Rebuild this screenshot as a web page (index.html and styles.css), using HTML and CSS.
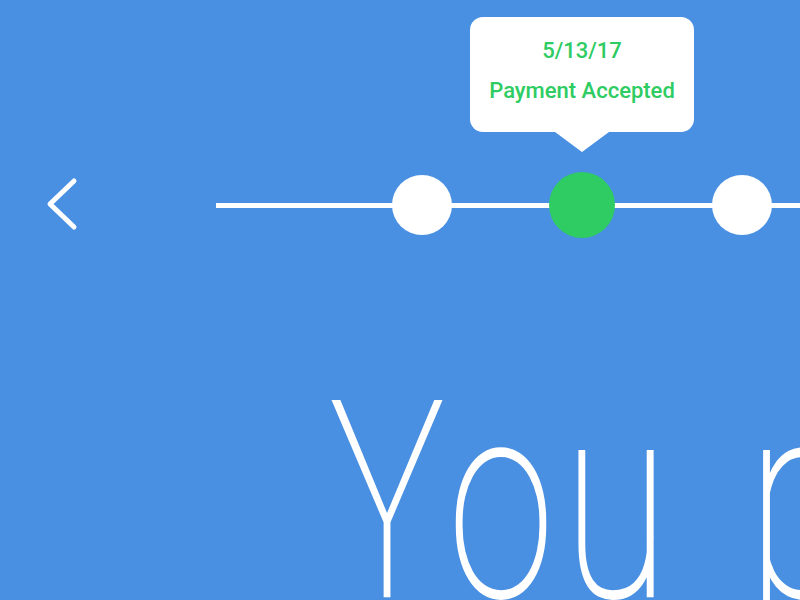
FILE: index.html
```html
<!DOCTYPE html>
<html lang="en">
<head>
  <meta charset="UTF-8">
  <meta name="viewport" content="width=device-width, initial-scale=1.0">
  <title>Payment Timeline</title>
  <link rel="stylesheet" href="styles.css">
</head>
<body>

  <!-- Timeline header -->
  <div class="timeline">
    <button class="back-button" aria-label="Back">
      <svg width="36" height="56" viewBox="0 0 36 56">
        <polyline points="30,4 6,27 30,50" fill="none" stroke="#ffffff" stroke-width="5" stroke-linecap="round" stroke-linejoin="round"/>
      </svg>
    </button>

    <div class="track">
      <div class="step"></div>
      <div class="step active">
        <div class="tooltip">
          <div class="tooltip-date">5/13/17</div>
          <div class="tooltip-status">Payment Accepted</div>
        </div>
      </div>
      <div class="step"></div>
    </div>
  </div>

  <!-- Headline -->
  <h1 class="headline"><span>You paid</span></h1>

</body>
</html>
```

FILE: styles.css
```css
/* Global Styles */
body {
  margin: 0;
  padding: 0;
  width: 800px;
  height: 600px;
  overflow: hidden;
  background-color: #4a90e2; /* Blue background */
  font-family: Roboto, sans-serif;
  color: white;
}

/* Timeline */
.timeline {
  display: flex;
  align-items: center;
  padding-top: 172px;
  height: 66px;
}

.back-button {
  background: none;
  border: none;
  padding: 0;
  margin-left: 44px;
  margin-right: 136px;
  width: 36px;
  height: 56px;
  cursor: pointer;
}

.back-button svg {
  display: block;
}

.track {
  flex: 1;
  height: 66px;
  display: flex;
  align-items: center;
  gap: 97px;
  padding-left: 176px;
  background: linear-gradient(#ffffff, #ffffff) left center / 100% 5px no-repeat;
}

.step {
  flex: none;
  width: 60px;
  height: 60px;
  border-radius: 50%;
  background-color: #ffffff;
  position: relative;
}

.step.active {
  width: 66px;
  height: 66px;
  background-color: #2ecc62; /* Green for current step */
}

/* Tooltip above the active step */
.tooltip {
  position: absolute;
  bottom: calc(100% + 40px);
  left: 50%;
  transform: translateX(-50%);
  width: 224px;
  height: 115px;
  box-sizing: border-box;
  padding-top: 14px;
  background-color: #ffffff;
  border-radius: 13px;
  color: #2ecc62;
  text-align: center;
  font-weight: 500;
  font-size: 22px;
  line-height: 40px;
}

.tooltip::after {
  content: "";
  position: absolute;
  top: 100%;
  left: 50%;
  transform: translateX(-50%);
  border-left: 27px solid transparent;
  border-right: 27px solid transparent;
  border-top: 20px solid #ffffff;
}

/* Headline */
.headline {
  margin: 0;
  padding-left: 330px;
  padding-top: 115px;
  font-weight: 100;
  font-size: 274px;
  line-height: 300px;
  letter-spacing: 14px;
  word-spacing: 20px;
  white-space: nowrap;
  -webkit-text-stroke: 2.5px #ffffff;
}

.headline span {
  display: inline-block;
  transform: scaleX(0.7);
  transform-origin: left center;
}
```
